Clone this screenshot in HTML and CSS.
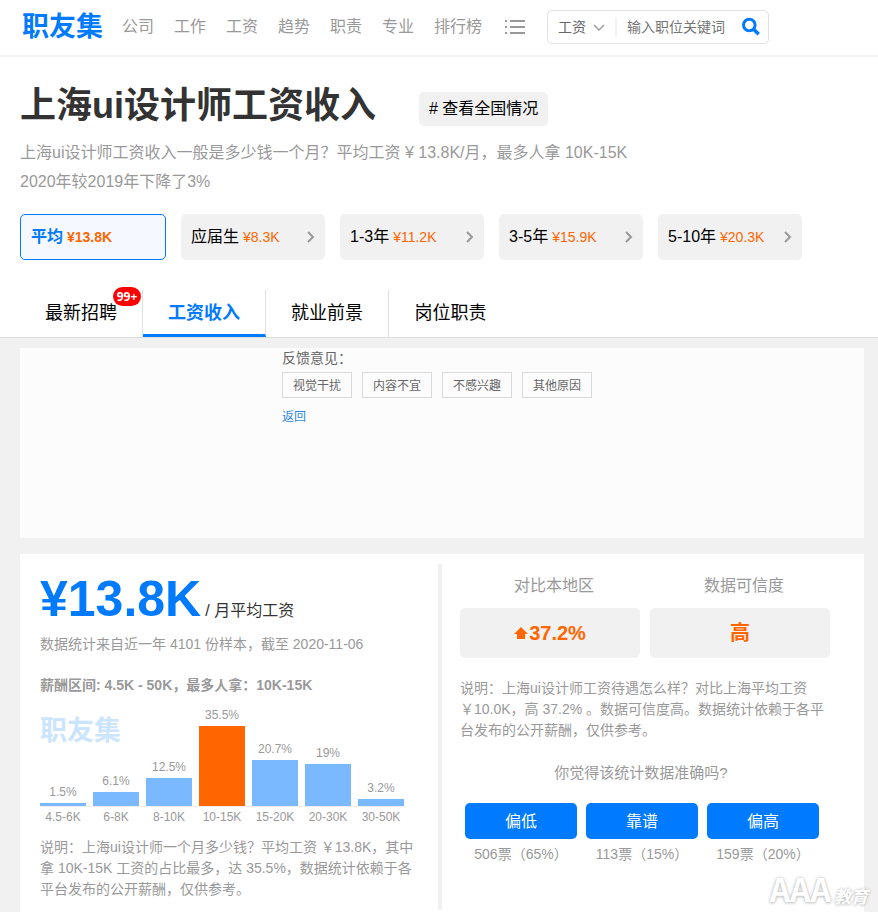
FILE: index.html
```html
<!DOCTYPE html>
<html lang="zh-CN">
<head>
<meta charset="utf-8">
<meta name="viewport" content="width=device-width, initial-scale=1">
<title>上海ui设计师工资收入</title>
<link rel="stylesheet" href="styles.css">
</head>
<body>
<header class="topbar">
  <a class="logo" href="#">职友集</a>
  <nav class="nav">
    <a href="#">公司</a>
    <a href="#">工作</a>
    <a href="#">工资</a>
    <a href="#">趋势</a>
    <a href="#">职责</a>
    <a href="#">专业</a>
    <a href="#">排行榜</a>
  </nav>
  <button class="menu" type="button" aria-label="更多">
    <svg width="20" height="16" viewBox="0 0 20 16" fill="#999"><path d="M0 1h2v2H0zM5 1h15v2H5zM0 7h2v2H0zM5 7h15v2H5zM0 13h2v2H0zM5 13h15v2H5z"/></svg>
  </button>
  <form class="search">
    <select class="search-type" aria-label="类别"><option>工资</option></select>
    <svg class="chevron" width="12" height="8" viewBox="0 0 12 8" fill="none" stroke="#999" stroke-width="1.4"><path d="M1 1l5 5 5-5"/></svg>
    <input class="search-input" type="text" placeholder="输入职位关键词" aria-label="输入职位关键词">
    <button class="search-go" type="button" aria-label="搜索">
      <svg width="20" height="20" viewBox="0 0 20 20" fill="none" stroke="#007bff"><circle cx="8.3" cy="8" r="5.8" stroke-width="3"/><path d="M12.3 12l5.4 5.2" stroke-width="3.6"/></svg>
    </button>
  </form>
</header>

<section class="intro">
  <div class="title-row">
    <h1>上海ui设计师工资收入</h1>
    <a class="tag" href="#"># 查看全国情况</a>
  </div>
  <p class="summary">上海ui设计师工资收入一般是多少钱一个月？平均工资 ¥ 13.8K/月，最多人拿 10K-15K<br>2020年较2019年下降了3%</p>
  <div class="levels">
    <a class="level level-active" href="#">平均 <b>¥13.8K</b></a>
    <a class="level" href="#">应届生 <b>¥8.3K</b><svg width="8" height="12" viewBox="0 0 8 12" fill="none" stroke="#999" stroke-width="2"><path d="M1 1l5 5-5 5"/></svg></a>
    <a class="level" href="#">1-3年 <b>¥11.2K</b><svg width="8" height="12" viewBox="0 0 8 12" fill="none" stroke="#999" stroke-width="2"><path d="M1 1l5 5-5 5"/></svg></a>
    <a class="level" href="#">3-5年 <b>¥15.9K</b><svg width="8" height="12" viewBox="0 0 8 12" fill="none" stroke="#999" stroke-width="2"><path d="M1 1l5 5-5 5"/></svg></a>
    <a class="level" href="#">5-10年 <b>¥20.3K</b><svg width="8" height="12" viewBox="0 0 8 12" fill="none" stroke="#999" stroke-width="2"><path d="M1 1l5 5-5 5"/></svg></a>
  </div>
  <nav class="tabs">
    <a href="#">最新招聘<span class="badge">99+</span></a>
    <a class="tab-active" href="#">工资收入</a>
    <a href="#">就业前景</a>
    <a href="#">岗位职责</a>
  </nav>
</section>

<main class="content">
  <section class="feedback">
    <div class="feedback-body">
      <p>反馈意见：</p>
      <div class="reasons">
        <button type="button">视觉干扰</button>
        <button type="button">内容不宜</button>
        <button type="button">不感兴趣</button>
        <button type="button">其他原因</button>
      </div>
      <a href="#">返回</a>
    </div>
  </section>

  <section class="panel">
    <div class="stats">
      <p class="salary"><strong>¥13.8K</strong><span>/ 月平均工资</span></p>
      <p class="note">数据统计来自近一年 4101 份样本，截至 2020-11-06</p>
      <p class="note range">薪酬区间: 4.5K - 50K，最多人拿：10K-15K</p>
      <div class="chart">
        <span class="chart-mark">职友集</span>
        <div class="bars">
          <div class="col"><span>1.5%</span><i style="height:3px"></i></div>
          <div class="col"><span>6.1%</span><i style="height:14px"></i></div>
          <div class="col"><span>12.5%</span><i style="height:28px"></i></div>
          <div class="col col-top"><span>35.5%</span><i style="height:80px"></i></div>
          <div class="col"><span>20.7%</span><i style="height:46px"></i></div>
          <div class="col"><span>19%</span><i style="height:42px"></i></div>
          <div class="col"><span>3.2%</span><i style="height:7px"></i></div>
        </div>
        <div class="axis"><span>4.5-6K</span><span>6-8K</span><span>8-10K</span><span>10-15K</span><span>15-20K</span><span>20-30K</span><span>30-50K</span></div>
      </div>
      <p class="note explain">说明：上海ui设计师一个月多少钱？平均工资 ￥13.8K，其中拿 10K-15K 工资的占比最多，达 35.5%，数据统计依赖于各平台发布的公开薪酬，仅供参考。</p>
    </div>
    <div class="compare">
      <div class="tiles">
        <div><h2>对比本地区</h2><p class="tile"><svg width="14" height="12" viewBox="0 0 14 12" fill="#ff6600"><path d="M7 0l7 7h-3v5H3V7H0z"/></svg>37.2%</p></div>
        <div><h2>数据可信度</h2><p class="tile">高</p></div>
      </div>
      <p class="note compare-note">说明：上海ui设计师工资待遇怎么样？对比上海平均工资 ￥10.0K，高 37.2% 。数据可信度高。数据统计依赖于各平台发布的公开薪酬，仅供参考。</p>
      <p class="question">你觉得该统计数据准确吗?</p>
      <div class="votes">
        <div><button type="button">偏低</button><span>506票（65%）</span></div>
        <div><button type="button">靠谱</button><span>113票（15%）</span></div>
        <div><button type="button">偏高</button><span>159票（20%）</span></div>
      </div>
    </div>
  </section>
</main>
<div class="watermark"><span class="wm-main">AAA</span><span class="wm-sub">教育</span></div>
</body>
</html>
```
FILE: styles.css
```css
* { box-sizing: border-box; }

body {
  margin: 0;
  background: #f1f1f1;
  color: #000;
  font-family: "Liberation Sans", "Noto Sans CJK SC", sans-serif;
  font-size: 16px;
  line-height: 24px;
}

a { color: inherit; text-decoration: none; }
h1, h2, p { margin: 0; }
svg { display: block; flex: none; }
button, input, select { font-family: inherit; }
button { padding: 0; border: 0; background: none; cursor: pointer; }

.topbar {
  display: flex;
  align-items: center;
  height: 57px;
  padding: 0 20px 2px;
  border-bottom: 2px solid #f2f2f2;
  background: #fff;
}

.logo {
  margin-left: 2px;
  color: #007bff;
  font-size: 27px;
  font-weight: bold;
  line-height: 36px;
}

.nav { display: flex; gap: 20px; margin-left: 19px; color: #999; white-space: nowrap; }
.menu { margin-left: 23px; }

.search {
  position: relative;
  display: flex;
  align-items: center;
  width: 222px;
  height: 34px;
  margin-left: 22px;
  border: 1px solid #e2e2e2;
  border-radius: 5px;
}

.search-type {
  width: 69px;
  height: 18px;
  padding: 0 0 0 10px;
  border: 0;
  border-right: 2px solid #f1f1f1;
  background: transparent;
  color: #666;
  font-size: 14px;
  line-height: 18px;
  appearance: none;
}

.chevron { position: absolute; left: 45px; top: 13px; pointer-events: none; }

.search-input {
  flex: 1;
  min-width: 0;
  height: 24px;
  padding: 0 0 0 10px;
  border: 0;
  outline: 0;
  background: transparent;
  font-size: 14px;
}

.search-input::placeholder { color: #757575; opacity: 1; }
.search-go { margin-right: 7px; }

.intro { padding: 26px 20px 0; border-bottom: 1px solid #ddd; background: #fff; }
.title-row { display: flex; align-items: center; gap: 43px; }
h1 { color: #333; font-size: 36px; line-height: 46px; }

.tag {
  margin-top: 6px;
  padding: 5px 10px;
  border-radius: 5px;
  background: #f1f1f1;
}

.summary { margin-top: 9px; color: #999; line-height: 29px; }
.levels { display: flex; gap: 15px; margin-top: 18px; }

.level {
  display: flex;
  align-items: center;
  gap: 4px;
  width: 144px;
  height: 46px;
  padding: 0 10px;
  border-radius: 5px;
  background: #f1f1f1;
  white-space: nowrap;
}

.level b { color: #ff6600; font-size: 14px; font-weight: normal; }
.level svg { margin-left: auto; }

.level-active {
  width: 146px;
  border: 1px solid #007bff;
  background: #f5f9ff;
  color: #007bff;
  font-weight: bold;
}

.level-active b { font-weight: bold; }
.tabs { display: flex; margin-top: 30px; font-size: 18px; }

.tabs a {
  position: relative;
  width: 123px;
  height: 47px;
  border-right: 1px solid #e1e1e1;
  line-height: 46px;
  text-align: center;
}

.tabs a:last-child { border-right: 0; }
.tabs .tab-active { border-bottom: 3px solid #007bff; color: #007bff; font-weight: bold; }

.badge {
  position: absolute;
  top: -3px;
  right: 1px;
  width: 28px;
  border-radius: 10px;
  background: #f00;
  color: #fff;
  font: bold 12px/19px "Open Sans", sans-serif;
}

.content { padding: 10px 14px 0 20px; }
.feedback { height: 190px; background: #fcfcfc; color: #666; font-size: 14px; line-height: 20px; }
.feedback-body { width: 320px; margin-left: 262px; }
.reasons { display: flex; gap: 10px; margin: 4px 0 8px; }

.reasons button {
  width: 70px;
  height: 26px;
  padding-bottom: 2px;
  border: 1px solid #d9d9d9;
  color: #666;
  font-size: 12px;
}

.feedback a { color: #2f88dd; font-size: 12px; }
.panel { display: flex; margin-top: 16px; padding: 10px 0 2px; background: #fff; }
.stats { flex: 1; padding: 0 24px 10px 20px; border-right: 4px solid #f1f1f1; }
.salary { display: flex; align-items: baseline; gap: 4px; padding: 1px 0; color: #333; white-space: nowrap; }
.salary strong { color: #007bff; font-family: "Liberation Sans", sans-serif; font-size: 50px; line-height: 68px; }
.note { color: #999; font-size: 14px; line-height: 21px; }
.stats .note { margin-right: -4px; }
.stats .range { margin-top: 20px; font-weight: bold; }
.chart { position: relative; margin-top: 8px; color: #999; font-size: 12px; line-height: 20px; }

.chart-mark {
  position: absolute;
  left: 0;
  top: 9px;
  color: #cce5ff;
  font-size: 27px;
  font-weight: bold;
  line-height: 36px;
}

.bars, .axis { display: grid; grid-template-columns: repeat(7, 46px); gap: 7px; text-align: center; }
.bars { align-items: end; width: 366px; border-bottom: 1px solid #eee; }
.axis span { white-space: nowrap; }
.axis { justify-items: center; }
.col span { display: block; line-height: 22px; }
.col i { display: block; background: #7ab8ff; }
.col-top i { background: #ff6600; }
.stats .explain { margin-top: 10px; }

.compare { width: 422px; padding: 10px 34px 0 18px; }
.tiles { display: grid; grid-template-columns: 1fr 1fr; gap: 10px; text-align: center; }
h2 { padding-left: 8px; color: #999; font-size: 16px; font-weight: normal; line-height: 24px; }

.tile {
  display: flex;
  align-items: center;
  justify-content: center;
  height: 50px;
  margin-top: 10px;
  border-radius: 5px;
  background: #f1f1f1;
  color: #ff6600;
  font-size: 20px;
  font-weight: bold;
}

.tile svg { margin-right: 1px; }
.compare-note { margin-top: 20px; }
.question { margin: 20px 8px 0 0; color: #999; font-size: 15px; line-height: 24px; text-align: center; }
.votes { display: flex; gap: 9px; margin: 18px 0 0 5px; }
.votes div { width: 112px; text-align: center; }

.votes button {
  display: block;
  width: 100%;
  height: 36px;
  padding-bottom: 3px;
  border-radius: 5px;
  background: #007bff;
  color: #fff;
  font-size: 16px;
}

.votes span { display: block; margin-top: 5px; color: #999; font-size: 14px; line-height: 20px; white-space: nowrap; }

.watermark {
  position: absolute;
  right: 10px;
  top: 864px;
  display: flex;
  align-items: flex-end;
  gap: 3px;
  height: 48px;
  color: #fff;
  font-weight: bold;
  text-shadow: 0 0 3px #bbb, 0 1px 3px #ccc;
}

.wm-main { font-family: "Noto Sans CJK SC", sans-serif; font-size: 32px; line-height: 48px; }
.wm-sub { font-size: 17px; font-style: italic; line-height: 28px; }
```
